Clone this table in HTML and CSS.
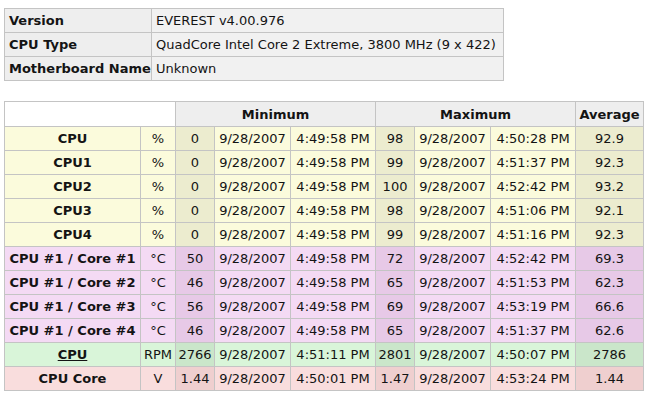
FILE: index.html
```html
<!DOCTYPE html>
<html>
<head>
<meta charset="utf-8">
<link rel="stylesheet" href="styles.css">
</head>
<body>
<table class="info">
  <colgroup><col class="c-key"><col class="c-val"></colgroup>
  <tr><th>Version</th><td>EVEREST v4.00.976</td></tr>
  <tr><th>CPU Type</th><td>QuadCore Intel Core 2 Extreme, 3800 MHz (9 x 422)</td></tr>
  <tr><th>Motherboard Name</th><td>Unknown</td></tr>
</table>

<table class="stats">
  <colgroup>
    <col class="w-label"><col class="w-unit"><col class="w-num"><col class="w-date"><col class="w-time"><col class="w-num"><col class="w-date"><col class="w-time"><col class="w-avg">
  </colgroup>
  <tr class="head">
    <td colspan="2" class="blank"></td>
    <th colspan="3">Minimum</th>
    <th colspan="3">Maximum</th>
    <th>Average</th>
  </tr>
  <tr class="load"><th>CPU</th><td>%</td><td class="v">0</td><td>9/28/2007</td><td>4:49:58 PM</td><td class="v">98</td><td>9/28/2007</td><td>4:50:28 PM</td><td class="v">92.9</td></tr>
  <tr class="load"><th>CPU1</th><td>%</td><td class="v">0</td><td>9/28/2007</td><td>4:49:58 PM</td><td class="v">99</td><td>9/28/2007</td><td>4:51:37 PM</td><td class="v">92.3</td></tr>
  <tr class="load"><th>CPU2</th><td>%</td><td class="v">0</td><td>9/28/2007</td><td>4:49:58 PM</td><td class="v">100</td><td>9/28/2007</td><td>4:52:42 PM</td><td class="v">93.2</td></tr>
  <tr class="load"><th>CPU3</th><td>%</td><td class="v">0</td><td>9/28/2007</td><td>4:49:58 PM</td><td class="v">98</td><td>9/28/2007</td><td>4:51:06 PM</td><td class="v">92.1</td></tr>
  <tr class="load"><th>CPU4</th><td>%</td><td class="v">0</td><td>9/28/2007</td><td>4:49:58 PM</td><td class="v">99</td><td>9/28/2007</td><td>4:51:16 PM</td><td class="v">92.3</td></tr>
  <tr class="temp"><th>CPU #1 / Core #1</th><td>°C</td><td class="v">50</td><td>9/28/2007</td><td>4:49:58 PM</td><td class="v">72</td><td>9/28/2007</td><td>4:52:42 PM</td><td class="v">69.3</td></tr>
  <tr class="temp"><th>CPU #1 / Core #2</th><td>°C</td><td class="v">46</td><td>9/28/2007</td><td>4:49:58 PM</td><td class="v">65</td><td>9/28/2007</td><td>4:51:53 PM</td><td class="v">62.3</td></tr>
  <tr class="temp"><th>CPU #1 / Core #3</th><td>°C</td><td class="v">56</td><td>9/28/2007</td><td>4:49:58 PM</td><td class="v">69</td><td>9/28/2007</td><td>4:53:19 PM</td><td class="v">66.6</td></tr>
  <tr class="temp"><th>CPU #1 / Core #4</th><td>°C</td><td class="v">46</td><td>9/28/2007</td><td>4:49:58 PM</td><td class="v">65</td><td>9/28/2007</td><td>4:51:37 PM</td><td class="v">62.6</td></tr>
  <tr class="fan"><th><span class="link">CPU</span></th><td>RPM</td><td class="v">2766</td><td>9/28/2007</td><td>4:51:11 PM</td><td class="v">2801</td><td>9/28/2007</td><td>4:50:07 PM</td><td class="v">2786</td></tr>
  <tr class="volt"><th>CPU Core</th><td>V</td><td class="v">1.44</td><td>9/28/2007</td><td>4:50:01 PM</td><td class="v">1.47</td><td>9/28/2007</td><td>4:53:24 PM</td><td class="v">1.44</td></tr>
</table>
</body>
</html>
```
FILE: styles.css
```css
html, body {
  margin: 0;
  background: #ffffff;
}
body {
  padding: 8px 4px;
  font-family: "DejaVu Sans", Verdana, sans-serif;
  font-size: 13px;
  color: #141414;
}
table {
  border-collapse: collapse;
  table-layout: fixed;
}
th, td {
  border: 1px solid #c4c4c4;
  padding: 0 4px;
  height: 23px;
  white-space: nowrap;
  overflow: hidden;
}

.info {
  width: 499px;
  margin-bottom: 20px;
}
.info .c-key { width: 147px; }
.info .c-val { width: 352px; }
.info th {
  text-align: left;
  font-weight: bold;
  background: #eeeeee;
}
.info td {
  text-align: left;
  background: #f1f1f1;
}

.stats {
  width: 639px;
}
.stats .w-label { width: 136px; }
.stats .w-unit { width: 35px; }
.stats .w-num { width: 39px; }
.stats .w-date { width: 76px; }
.stats .w-time { width: 85px; }
.stats .w-avg { width: 68px; }

.stats th, .stats td {
  text-align: center;
  padding: 0 2px;
}
.stats th { font-weight: bold; }
.stats .head th {
  background: #eeeeee;
  height: 24px;
}
.stats .head .blank {
  background: #ffffff;
}

.load th, .load td { background: #fbfbdc; }
.load td.v { background: #ececcf; }

.temp th, .temp td { background: #f4daf4; }
.temp td.v { background: #e7c9e7; }

.fan th, .fan td { background: #d9f5d9; }
.fan td.v { background: #cae6ca; }

.volt th, .volt td { background: #f9dddd; }
.volt td.v { background: #efcfcf; }

.link {
  text-decoration: underline;
}
```
